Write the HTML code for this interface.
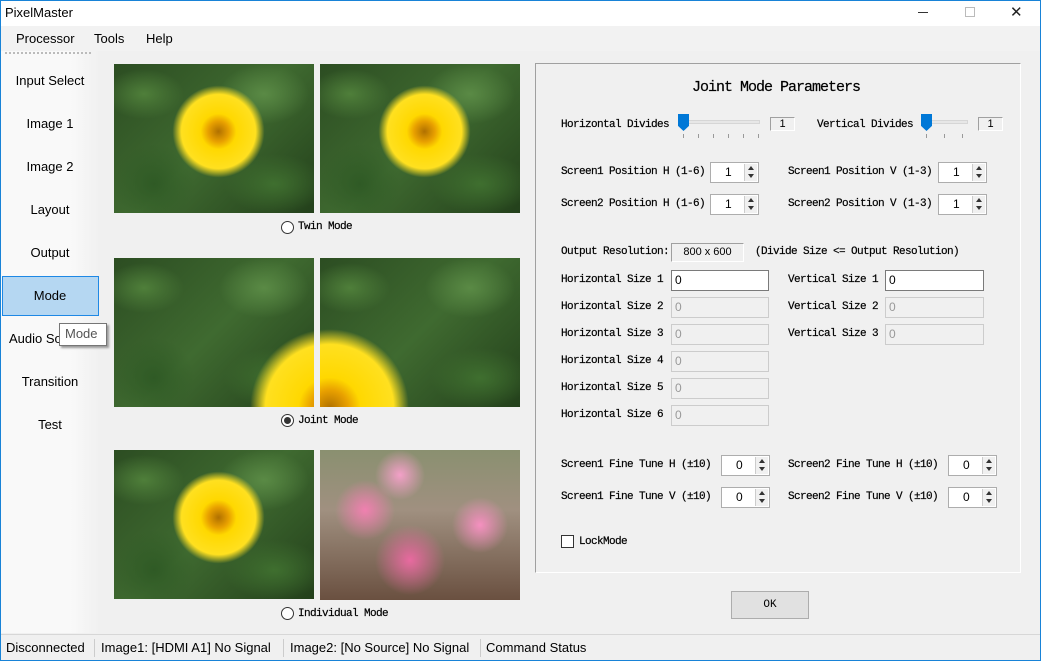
<!DOCTYPE html><html><head><meta charset="utf-8"><style>
*{margin:0;padding:0;box-sizing:border-box}
body{width:1041px;height:661px;overflow:hidden;background:#f0f0f0;font-family:"Liberation Sans",sans-serif;font-size:13px;color:#000;position:relative}
.a{position:absolute}
.win{border-left:1px solid #1883d7;border-right:1px solid #1883d7;border-bottom:1px solid #1883d7}
.t{position:absolute;font-family:"Liberation Mono",monospace;font-size:11px;letter-spacing:-0.6px;white-space:pre;line-height:12px;-webkit-text-stroke:0.2px #000}
.side{position:absolute;left:1px;width:98px;text-align:center;font-size:13px}
.pic{position:absolute;width:200px;height:149px;overflow:hidden;
background:radial-gradient(ellipse 40px 25px at 30px 30px,#4f7f3a,transparent),radial-gradient(ellipse 50px 30px at 160px 120px,#3f6f2f,transparent),radial-gradient(ellipse 45px 30px at 150px 30px,#5a8a45,transparent),radial-gradient(ellipse 40px 40px at 40px 120px,#2f5a25,transparent),linear-gradient(135deg,#2c4d22,#3f6a30 50%,#23401b)}
.fl{position:absolute;border-radius:50%;background:radial-gradient(circle,#b07000 0,#e8a000 14%,#ffd800 24%,#ffe020 50%,rgba(255,220,0,0) 62%)}
.in{position:absolute;background:#fff;border:1px solid #7a7a7a;font-family:"Liberation Sans",sans-serif;font-size:12px;padding-left:3px;line-height:18px}
.dis{background:#f0f0f0;border-color:#ccc;color:#999}
.sp{position:absolute;height:21px;width:49px;background:#fff;border:1px solid #adadad;font-size:12px;line-height:19px;padding-left:14px}
.sp i{position:absolute;right:1px;top:1px;width:13px;height:17px;border-left:1px solid #ccc;background:#f0f0f0}
.sp i:before{content:"";position:absolute;left:3px;top:2px;border:3px solid transparent;border-bottom:4px solid #333;border-top:0}
.sp i:after{content:"";position:absolute;left:3px;top:10px;border:3px solid transparent;border-top:4px solid #333;border-bottom:0}
.rad{position:absolute;width:13px;height:13px;border:1px solid #333;border-radius:50%;background:#fff}
</style></head><body>
<div class="a win" style="left:0;top:0;width:1041px;height:661px"></div>
<div class="a" style="left:0;top:0;width:1041px;height:26px;background:#fff;border-top:1px solid #1883d7;border-left:1px solid #1883d7;border-right:1px solid #1883d7"></div>
<div class="a" style="left:5px;top:5px;font-size:13px">PixelMaster</div>
<div class="a" style="left:918px;top:12px;width:10px;border-top:1px solid #333"></div>
<div class="a" style="left:965px;top:7px;width:10px;height:10px;border:1px solid #bbb"></div>
<div class="a" style="left:1010px;top:3px;font-size:15px;color:#222">&#10005;</div>
<div class="a" style="left:1px;top:26px;width:1039px;height:25px;background:#f2f2f2"></div>
<div class="a" style="left:16px;top:31px">Processor</div>
<div class="a" style="left:94px;top:31px">Tools</div>
<div class="a" style="left:146px;top:31px">Help</div>
<div class="a" style="left:1px;top:51px;width:99px;height:582px;background:linear-gradient(90deg,#f9f9f9 70%,#f0f0f0)"></div>
<div class="a" style="left:5px;top:52px;width:86px;border-top:2px dotted #bbb"></div>
<div class="side" style="top:73px">Input Select</div>
<div class="side" style="top:116px">Image 1</div>
<div class="side" style="top:159px">Image 2</div>
<div class="side" style="top:202px">Layout</div>
<div class="side" style="top:245px">Output</div>
<div class="a" style="left:2px;top:276px;width:97px;height:40px;background:#b5d7f2;border:1px solid #1e88e5"></div>
<div class="side" style="top:288px">Mode</div>
<div class="side" style="top:331px;left:-1px;text-align:left;padding-left:10px">Audio So</div>
<div class="side" style="top:374px">Transition</div>
<div class="side" style="top:417px">Test</div>
<div class="a" style="left:59px;top:323px;width:48px;height:23px;background:#fff;border:1px solid #767676;box-shadow:2px 2px 2px #999;color:#555;padding-left:5px;line-height:20px">Mode</div>

<div class="pic" style="left:114px;top:64px"><div class="fl" style="left:52px;top:15px;width:105px;height:105px"></div></div>
<div class="pic" style="left:320px;top:64px"><div class="fl" style="left:52px;top:15px;width:105px;height:105px"></div></div>
<div class="rad" style="left:281px;top:221px"></div><div class="t" style="left:298px;top:221px">Twin Mode</div>
<div class="pic" style="left:114px;top:258px"><div class="fl" style="left:125px;top:60px;width:180px;height:180px"></div></div>
<div class="pic" style="left:320px;top:258px"><div class="fl" style="left:-80px;top:60px;width:180px;height:180px"></div></div>
<div class="rad" style="left:281px;top:414px"><div class="a" style="left:2px;top:2px;width:7px;height:7px;border-radius:50%;background:#333"></div></div><div class="t" style="left:298px;top:415px">Joint Mode</div>
<div class="pic" style="left:114px;top:450px"><div class="fl" style="left:52px;top:15px;width:105px;height:105px"></div></div>
<div class="a" style="left:320px;top:450px;width:200px;height:150px;background:radial-gradient(circle 30px at 45px 60px,#f080b0,transparent),radial-gradient(circle 28px at 160px 75px,#f590c0,transparent),radial-gradient(circle 35px at 90px 110px,#e86aa0,transparent),radial-gradient(circle 25px at 80px 25px,#f3a0c8,transparent),linear-gradient(180deg,#8a9070,#a09080 40%,#6a5040)"></div>
<div class="rad" style="left:281px;top:607px"></div><div class="t" style="left:298px;top:608px">Individual Mode</div>

<div class="a" style="left:535px;top:63px;width:486px;height:510px;border:1px solid #a0a0a0;border-right-color:#fff;border-bottom-color:#fff"></div>
<div class="t" style="left:692px;top:82px;font-size:15px;letter-spacing:-1px">Joint Mode Parameters</div>
<div class="t" style="left:561px;top:119px">Horizontal Divides</div>
<div class="a" style="left:679px;top:120px;width:81px;height:4px;background:#e7e7e7;border:1px solid #d6d6d6"></div>
<div class="a" style="left:678px;top:114px;width:11px;height:17px;background:#0078d7;clip-path:polygon(0 0,100% 0,100% 70%,50% 100%,0 70%)"></div>
<div class="a" style="left:683px;top:134px;width:76px;height:4px;background:repeating-linear-gradient(90deg,#999 0 1px,transparent 1px 15px)"></div>
<div class="a" style="left:770px;top:117px;width:25px;height:14px;border:1px solid #a0a0a0;border-right-color:#fff;border-bottom-color:#fff;font-size:11px;text-align:center;line-height:12px">1</div>
<div class="t" style="left:817px;top:119px">Vertical Divides</div>
<div class="a" style="left:922px;top:120px;width:46px;height:4px;background:#e7e7e7;border:1px solid #d6d6d6"></div>
<div class="a" style="left:921px;top:114px;width:11px;height:17px;background:#0078d7;clip-path:polygon(0 0,100% 0,100% 70%,50% 100%,0 70%)"></div>
<div class="a" style="left:926px;top:134px;width:40px;height:4px;background:repeating-linear-gradient(90deg,#999 0 1px,transparent 1px 18px)"></div>
<div class="a" style="left:978px;top:117px;width:25px;height:14px;border:1px solid #a0a0a0;border-right-color:#fff;border-bottom-color:#fff;font-size:11px;text-align:center;line-height:12px">1</div>

<div class="t" style="left:561px;top:166px">Screen1 Position H (1-6)</div><div class="sp" style="left:710px;top:162px">1<i></i></div>
<div class="t" style="left:788px;top:166px">Screen1 Position V (1-3)</div><div class="sp" style="left:938px;top:162px">1<i></i></div>
<div class="t" style="left:561px;top:198px">Screen2 Position H (1-6)</div><div class="sp" style="left:710px;top:194px">1<i></i></div>
<div class="t" style="left:788px;top:198px">Screen2 Position V (1-3)</div><div class="sp" style="left:938px;top:194px">1<i></i></div>

<div class="t" style="left:561px;top:246px">Output Resolution:</div>
<div class="a" style="left:671px;top:243px;width:73px;height:19px;border:1px solid #a0a0a0;border-right-color:#fff;border-bottom-color:#fff;font-size:11px;text-align:center;line-height:17px">800 x 600</div>
<div class="t" style="left:755px;top:246px">(Divide Size &lt;= Output Resolution)</div>

<div class="t" style="left:561px;top:274px">Horizontal Size 1</div><div class="in" style="left:671px;top:270px;width:98px;height:21px">0</div>
<div class="t" style="left:561px;top:301px">Horizontal Size 2</div><div class="in dis" style="left:671px;top:297px;width:98px;height:21px">0</div>
<div class="t" style="left:561px;top:328px">Horizontal Size 3</div><div class="in dis" style="left:671px;top:324px;width:98px;height:21px">0</div>
<div class="t" style="left:561px;top:355px">Horizontal Size 4</div><div class="in dis" style="left:671px;top:351px;width:98px;height:21px">0</div>
<div class="t" style="left:561px;top:382px">Horizontal Size 5</div><div class="in dis" style="left:671px;top:378px;width:98px;height:21px">0</div>
<div class="t" style="left:561px;top:409px">Horizontal Size 6</div><div class="in dis" style="left:671px;top:405px;width:98px;height:21px">0</div>
<div class="t" style="left:788px;top:274px">Vertical Size 1</div><div class="in" style="left:885px;top:270px;width:99px;height:21px">0</div>
<div class="t" style="left:788px;top:301px">Vertical Size 2</div><div class="in dis" style="left:885px;top:297px;width:99px;height:21px">0</div>
<div class="t" style="left:788px;top:328px">Vertical Size 3</div><div class="in dis" style="left:885px;top:324px;width:99px;height:21px">0</div>

<div class="t" style="left:561px;top:459px">Screen1 Fine Tune H (±10)</div><div class="sp" style="left:721px;top:455px">0<i></i></div>
<div class="t" style="left:788px;top:459px">Screen2 Fine Tune H (±10)</div><div class="sp" style="left:948px;top:455px">0<i></i></div>
<div class="t" style="left:561px;top:491px">Screen1 Fine Tune V (±10)</div><div class="sp" style="left:721px;top:487px">0<i></i></div>
<div class="t" style="left:788px;top:491px">Screen2 Fine Tune V (±10)</div><div class="sp" style="left:948px;top:487px">0<i></i></div>

<div class="a" style="left:561px;top:535px;width:13px;height:13px;border:1px solid #333;background:#fff"></div>
<div class="t" style="left:579px;top:536px">LockMode</div>

<div class="a" style="left:731px;top:591px;width:78px;height:28px;background:#e1e1e1;border:1px solid #adadad;font-family:'Liberation Mono',monospace;font-size:11px;text-align:center;line-height:26px">OK</div>

<div class="a" style="left:1px;top:634px;width:1039px;height:26px;background:#f0f0f0;border-top:1px solid #d7d7d7"></div>
<div class="a" style="left:6px;top:640px">Disconnected</div>
<div class="a" style="left:94px;top:639px;height:18px;border-left:1px solid #ccc"></div>
<div class="a" style="left:101px;top:640px">Image1: [HDMI A1] No Signal</div>
<div class="a" style="left:283px;top:639px;height:18px;border-left:1px solid #ccc"></div>
<div class="a" style="left:290px;top:640px">Image2: [No Source] No Signal</div>
<div class="a" style="left:480px;top:639px;height:18px;border-left:1px solid #ccc"></div>
<div class="a" style="left:486px;top:640px">Command Status</div>
</body></html>
